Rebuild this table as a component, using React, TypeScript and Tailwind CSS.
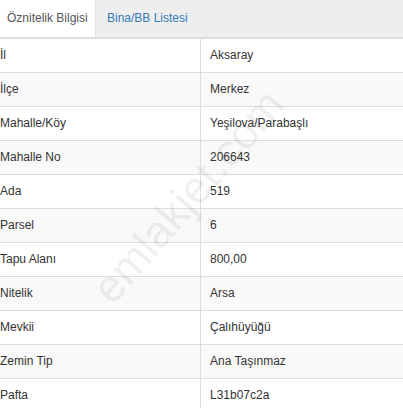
import React from "react";

const rows: [string, string][] = [
  ["İl", "Aksaray"],
  ["İlçe", "Merkez"],
  ["Mahalle/Köy", "Yeşilova/Parabaşlı"],
  ["Mahalle No", "206643"],
  ["Ada", "519"],
  ["Parsel", "6"],
  ["Tapu Alanı", "800,00"],
  ["Nitelik", "Arsa"],
  ["Mevkii", "Çalıhüyüğü"],
  ["Zemin Tip", "Ana Taşınmaz"],
  ["Pafta", "L31b07c2a"],
];

export default function App() {
  return (
    <div
      className="relative w-[403px] h-[408px] overflow-hidden bg-white text-[12px] leading-[17px] text-[#333]"
      style={{ fontFamily: '"Liberation Sans", Arial, sans-serif' }}
    >
      <div className="flex h-[38px] bg-[#eeeeee] border-b border-[#dddddd]">
        <div className="w-[96px] h-[37px] bg-white flex items-center pl-[7px] text-[#555] border-r border-[#e5e5e5]">
          Öznitelik Bilgisi
        </div>
        <div className="flex items-center pl-[11px] pb-px text-[#337ab7]">Bina/BB Listesi</div>
      </div>
      <div className="flex flex-col">
        {rows.map(([k, v], i) => (
          <div
            key={k}
            className={`flex h-[34px] border-t border-[#dddddd] ${i % 2 === 1 ? "bg-[#f9f9f9]" : "bg-white"}`}
          >
            <div className="w-[201px] shrink-0 border-r border-[#dddddd] flex items-center pl-0">{k}</div>
            <div className="flex-1 flex items-center pl-[9px]">{v}</div>
          </div>
        ))}
      </div>
      <div
        className="pointer-events-none absolute left-[188px] top-[196px] text-[45px] leading-none text-[rgba(0,0,0,0.07)] whitespace-nowrap"
        style={{ transform: "translate(-50%, -50%) rotate(-49deg)" }}
      >
        emlakjet.com
      </div>
    </div>
  );
}
